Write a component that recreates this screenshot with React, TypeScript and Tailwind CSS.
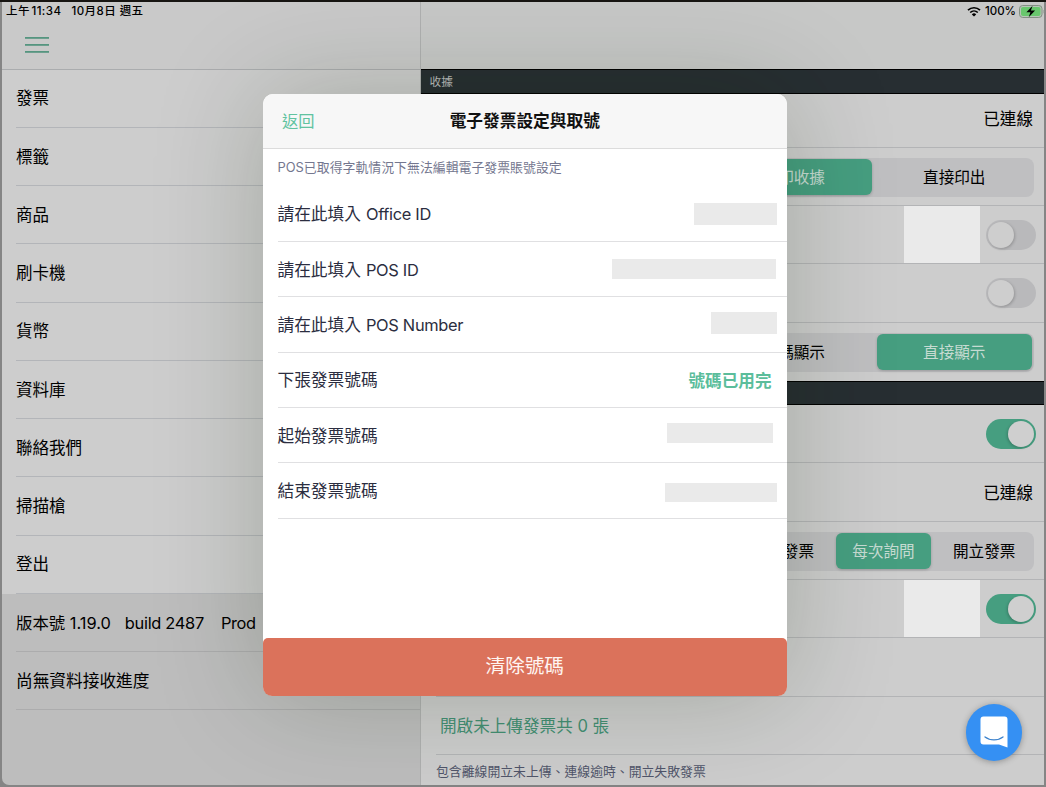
import React from "react";

const menuItems = ["發票", "標籤", "商品", "刷卡機", "貨幣", "資料庫", "聯絡我們", "掃描槍", "登出"];

function Toggle({ on = false }: { on?: boolean }) {
  return on ? (
    <div className="flex h-[30px] w-[49.5px] shrink-0 justify-end rounded-full bg-[#469e80] p-[2px]">
      <div className="size-[26px] rounded-full bg-[#cfcfcf] shadow-[-1px_1px_3px_rgba(0,0,0,0.2)]" />
    </div>
  ) : (
    <div className="flex h-[30px] w-[49.5px] shrink-0 rounded-full bg-[#b9b9bb] p-[2px]">
      <div className="size-[26px] rounded-full bg-[#cecece] shadow-[1px_1px_3px_rgba(0,0,0,0.2)]" />
    </div>
  );
}

function Segments({ items, active, width }: { items: string[]; active: number; width: string }) {
  return (
    <div className={`flex h-[39px] shrink-0 gap-[5px] rounded-[8px] bg-[#bfbfc1] p-[1.5px] ${width}`}>
      {items.map((item, i) => (
        <div
          key={item}
          className={`flex flex-1 items-center justify-center rounded-[6px] pt-px text-[15.6px] leading-none whitespace-nowrap ${
            i === active ? "bg-[#469e80] text-[#c6dbd2] shadow-[0_1px_3px_rgba(0,0,0,0.2)]" : "text-black"
          }`}
        >
          {item}
        </div>
      ))}
    </div>
  );
}

function SettingRow({ children, height = "h-[58.25px]", last = false }: { children?: React.ReactNode; height?: string; last?: boolean }) {
  return (
    <div className={`ml-[15px] flex shrink-0 items-center justify-end ${height} ${last ? "" : "border-b border-[#b3b4b6]"}`}>
      {children}
    </div>
  );
}

function Masked() {
  return <div className="mr-[6px] h-full w-[76px] bg-[#eaeaea]" />;
}

function Field({ label, latin, children }: { label: string; latin?: string; children: React.ReactNode }) {
  return (
    <div className="ml-[15px] flex h-[55.4px] items-center justify-between border-b border-[#e0e0e2] text-[16.7px] text-[#2b2d40]">
      <span className="flex items-baseline gap-[5px] pt-[2px]">
        <span>{label}</span>
        {latin && <span className="text-[16.4px] tracking-[-0.3px]">{latin}</span>}
      </span>
      {children}
    </div>
  );
}

function StatusBar() {
  return (
    <div className="absolute inset-x-0 top-[2px] flex h-[18px] items-center justify-between pl-[6px] text-[11.5px] font-medium text-black">
      <div className="flex gap-[10px] pt-[2px] whitespace-pre tracking-[0.45px]">
        <span className="[word-spacing:-2px]">上午 11:34</span>
        <span>10月8日 週五</span>
      </div>
      <div className="flex items-center">
        <svg width="14" height="11" viewBox="0 0 14 11" className="mr-[4px]" fill="none" stroke="black">
          <path d="M1 4.2a8.6 8.6 0 0 1 12 0" strokeWidth="1.7" />
          <path d="M3.2 6.5a5.5 5.5 0 0 1 7.6 0" strokeWidth="1.6" />
          <path d="M7 10.6 4.8 8.4a3.1 3.1 0 0 1 4.4 0Z" fill="black" stroke="none" />
        </svg>
        <span className="w-[34px] pt-px">100%</span>
        <svg width="27" height="13" viewBox="0 0 27 13">
          <rect x="0.5" y="0.5" width="22.5" height="12" rx="3.2" fill="#b7c5b7" stroke="#829082" />
          <rect x="2" y="2" width="19.5" height="9" rx="2" fill="#68c76d" />
          <path d="M24.5 4.7c1.5.7 1.5 3 0 3.7Z" fill="#8a928a" />
          <path d="M13.6.8 7.4 7.2h4l-1.7 5.1 6.4-6.7h-4.2Z" fill="black" />
        </svg>
      </div>
    </div>
  );
}

export default function App() {
  return (
    <div className="relative flex h-[787px] w-[1046px] overflow-hidden bg-[#858585] p-[2px] font-['Inter','Noto_Sans_CJK_TC',sans-serif] shadow-[inset_0_2px_0_#171512]">
      <aside className="flex w-[418px] shrink-0 flex-col overflow-hidden rounded-bl-[7px] bg-[#bdbdbd]">
        <div className="flex h-[67.5px] shrink-0 items-start border-b border-[#aaacae] bg-[#c9c9c9] pt-[35px] pl-[23px]">
          <svg width="24" height="17" viewBox="0 0 24 17" fill="#55957f">
            <rect y="0" width="24" height="1.8" />
            <rect y="7" width="24" height="1.8" />
            <rect y="14" width="24" height="1.8" />
          </svg>
        </div>
        <div className="shrink-0 bg-[#cdcdcd]">
          {menuItems.map((item) => (
            <div key={item} className="ml-[14px] flex h-[58.25px] items-center border-b border-[#b3b5b9] pt-px text-[16.5px] text-black">
              {item}
            </div>
          ))}
        </div>
        <div className="ml-[14px] flex h-[58.25px] shrink-0 items-center border-b border-[#acacad] pt-[2px] text-[16.4px] whitespace-pre text-black">
          <span>版本號 1.19.0</span>
          <span className="ml-[14px] tracking-[-0.3px]">build 2487</span>
          <span className="ml-[17px] tracking-[-0.4px]">Prod</span>
        </div>
        <div className="ml-[14px] flex h-[58.25px] shrink-0 items-center border-b border-[#acacad] pt-px text-[16.7px] text-black">
          尚無資料接收進度
        </div>
      </aside>

      <main className="flex min-w-0 flex-1 flex-col overflow-hidden border-l border-[#afb0b0] bg-[#cdcdcd] text-[16.6px] text-black">
        <div className="h-[67px] shrink-0 bg-[#c7c8c7]" />
        <div className="flex h-[24.5px] shrink-0 items-center border-y border-black bg-[#272e32] pt-[3px] pl-[8.5px] text-[11.7px] text-[#b9bbbb]">收據</div>
        <SettingRow height="h-[54.25px]"><span className="mr-[11px] pb-px">已連線</span></SettingRow>
        <SettingRow>
          <div className="mr-[10.5px] pt-[2px]"><Segments items={["列印收據", "直接印出"]} active={0} width="w-[319px]" /></div>
        </SettingRow>
        <SettingRow><Masked /><div className="mr-[8.5px] pt-px"><Toggle /></div></SettingRow>
        <SettingRow><div className="mr-[8.5px] pt-px"><Toggle /></div></SettingRow>
        <SettingRow height="h-[58px]" last>
          <div className="mr-[10.5px] pt-px"><Segments items={["條碼顯示", "直接顯示"]} active={1} width="w-[319px]" /></div>
        </SettingRow>
        <div className="h-[24.5px] shrink-0 border-y border-black bg-[#272e32]" />
        <SettingRow height="h-[58.25px]"><div className="mr-[8.5px] pt-px"><Toggle on /></div></SettingRow>
        <SettingRow><span className="mr-[11px] pt-[3px]">已連線</span></SettingRow>
        <SettingRow>
          <div className="mr-[10.5px] pt-[2px]"><Segments items={["不開發票", "每次詢問", "開立發票"]} active={1} width="w-[300px]" /></div>
        </SettingRow>
        <SettingRow><Masked /><div className="mr-[8.5px] pt-px"><Toggle on /></div></SettingRow>
        <SettingRow height="h-[58.5px]" />
        <SettingRow height="h-[58.5px]">
          <div className="w-full pt-[2px] pl-[4px] text-[16.6px] whitespace-pre text-[#438f74]">開啟未上傳發票共 0 張</div>
        </SettingRow>
        <div className="flex h-[31px] shrink-0 items-center pt-[2px] pl-[15px] text-[12.85px] text-[#50556a]">包含離線開立未上傳、連線逾時、開立失敗發票</div>
      </main>

      <StatusBar />

      <section className="absolute top-[93.5px] left-[262.5px] flex h-[602px] w-[524.5px] flex-col rounded-[10px] bg-white shadow-[0_0_110px_rgba(20,35,10,0.22)]">
        <header className="grid h-[55px] shrink-0 grid-cols-3 items-center rounded-t-[10px] border-b border-[#dcdcdc] bg-[#f7f7f7] text-[16.7px]">
          <span className="pt-px pl-[19.5px] text-[16.3px] text-[#61c3a0]">返回</span>
          <h1 className="pt-[2px] text-center font-bold whitespace-nowrap text-[#111]">電子發票設定與取號</h1>
        </header>
        <p className="flex h-[38px] shrink-0 items-center pl-[15px] text-[12.9px] text-[#74778f]">POS已取得字軌情況下無法編輯電子發票賬號設定</p>
        <Field label="請在此填入" latin="Office ID"><div className="mr-[10px] h-[22px] w-[83px] bg-[#eaeaea]" /></Field>
        <Field label="請在此填入" latin="POS ID"><div className="mr-[11px] h-[20px] w-[164px] bg-[#eaeaea]" /></Field>
        <Field label="請在此填入" latin="POS Number"><div className="mr-[10px] mb-[2px] h-[22px] w-[66px] bg-[#eaeaea]" /></Field>
        <Field label="下張發票號碼"><span className="mr-[15.5px] pt-[3px] text-[16.6px] font-bold text-[#5bbd9b]">號碼已用完</span></Field>
        <Field label="起始發票號碼"><div className="mr-[14px] mb-[5px] h-[20px] w-[106px] bg-[#eaeaea]" /></Field>
        <Field label="結束發票號碼"><div className="mt-[4px] mr-[10px] h-[19px] w-[112px] bg-[#eaeaea]" /></Field>
        <button className="mt-auto h-[58px] shrink-0 rounded-t-[5px] rounded-b-[9px] bg-[#db725b] pt-px text-[19.6px] text-[#fff5f2]">清除號碼</button>
      </section>

      <button aria-label="Chat" className="absolute top-[704px] left-[965.5px] flex size-[56.5px] items-center justify-center rounded-full bg-[#3590f3] shadow-[0_1px_6px_rgba(0,0,0,0.3)]">
        <svg width="28" height="32" viewBox="0 0 28 32">
          <path d="M3.5.5h21a3 3 0 0 1 3 3v28L19 28.5H3.5a3 3 0 0 1-3-3v-22a3 3 0 0 1 3-3Z" fill="white" />
          <path d="M5 21c5 3.9 13 3.9 18 0" fill="none" stroke="#3c82cc" strokeWidth="1.3" strokeLinecap="round" />
        </svg>
      </button>
    </div>
  );
}
